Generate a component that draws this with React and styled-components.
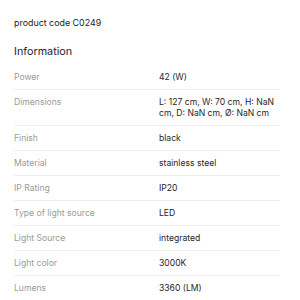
import React from 'react';
import styled, { createGlobalStyle } from 'styled-components';

const specs = [
  { label: 'Power', value: '42 (W)' },
  { label: 'Dimensions', value: 'L: 127 cm, W: 70 cm, H: NaN cm, D: NaN cm, Ø: NaN cm' },
  { label: 'Finish', value: 'black' },
  { label: 'Material', value: 'stainless steel' },
  { label: 'IP Rating', value: 'IP20' },
  { label: 'Type of light source', value: 'LED' },
  { label: 'Light Source', value: 'integrated' },
  { label: 'Light color', value: '3000K' },
  { label: 'Lumens', value: '3360 (LM)' },
];

const GlobalStyle = createGlobalStyle`
  body {
    margin: 0;
    background: #fff;
    font-family: Inter, "Liberation Sans", sans-serif;
  }
`;

const Page = styled.div`
  padding: 16px 20px 0 14px;
`;

const Code = styled.div`
  font-size: 8.9px;
  line-height: 14px;
  color: #222;
`;

const Heading = styled.h2`
  margin: 15px 0 0;
  font-size: 10.8px;
  font-weight: 400;
  line-height: 14px;
  color: #1e1e1e;
`;

const Table = styled.div`
  margin-top: 6px;
`;

const Row = styled.div`
  display: grid;
  grid-template-columns: 145px 1fr;
  padding: 7px 0 6px;
  border-bottom: 1px solid #eee;
  font-size: 8.6px;
  line-height: 11px;
`;

const Label = styled.div`
  color: #9a9a9a;
`;

const Value = styled.div`
  color: #262626;
`;

export default function App() {
  return (
    <>
      <GlobalStyle />
      <Page>
        <Code>product code C0249</Code>
        <Heading>Information</Heading>
        <Table>
          {specs.map((s) => (
            <Row key={s.label}>
              <Label>{s.label}</Label>
              <Value>{s.value}</Value>
            </Row>
          ))}
        </Table>
      </Page>
    </>
  );
}
